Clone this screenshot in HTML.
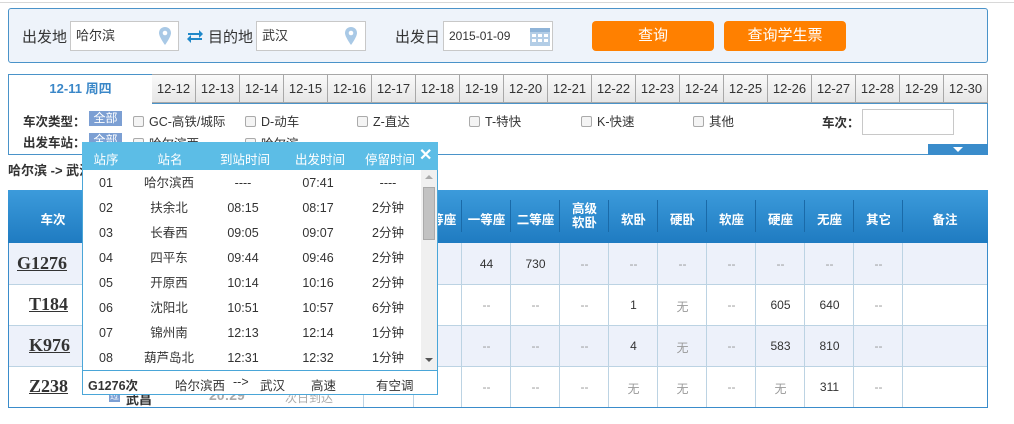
<!DOCTYPE html>
<html><head><meta charset="utf-8"><style>
*{margin:0;padding:0;box-sizing:border-box}
body{width:1014px;height:424px;background:#fff;position:relative;overflow:hidden;font-family:"Liberation Sans","Noto Sans CJK SC",sans-serif;font-size:12px;color:#333}
.a{position:absolute}
.lbl{font-size:15px;color:#333}
.inp{background:#fff;border:1px solid #c8c8c8;height:30px;font-size:13px;line-height:28px;padding-left:5px}
.btn{background:#ff8000;color:#fff;border-radius:4px;font-size:15px;text-align:center;line-height:30px;height:30px}
.tab{top:74px;height:29px;border:1px solid #a8a8a8;border-left:none;background:linear-gradient(#fafafa,#e6e6e6);font-size:13px;text-align:center;line-height:28px;width:44px}
.cb{display:inline-block;width:11px;height:11px;border:1px solid #aaa;border-radius:2px;background:#f4f4f4;vertical-align:-1px;margin-right:5px}
.f{font-size:12.5px}
.th{color:#fff;font-weight:bold;font-size:12.5px;text-align:center}
.hl{top:200px;width:1px;height:32px;background:#1a6aa8}
.vl{width:1px;background:#bcd3e3}
.c{text-align:center;font-size:12px;color:#333}
.d{color:#999}
.tn{font-family:"Liberation Serif",serif;font-weight:bold;font-size:18px;text-decoration:underline;color:#333}
.pr{font-size:12.5px;color:#333}
</style></head><body>
<div class="a" style="left:0;top:2px;width:1014px;height:1px;background:#d8d8d8"></div>
<div class="a" style="left:8px;top:8px;width:980px;height:55px;background:#eef3fa;border:1px solid #4a93c9;border-radius:3px"></div>
<div class="a lbl" style="left:22px;top:26px">出发地</div>
<div class="a inp" style="left:70px;top:21px;width:109px">哈尔滨</div>
<svg class="a" style="left:158px;top:26px" width="14" height="20"><path d="M7 1C3.5 1 1 3.6 1 7c0 4 6 12 6 12s6-8 6-12c0-3.4-2.5-6-6-6z" fill="#a9c9e6"/><circle cx="7" cy="7" r="2.3" fill="#fff"/></svg>
<svg class="a" style="left:186px;top:27px" width="18" height="17"><path d="M2 6h11V3l4 4-4 4V8H2z M16 11H5V8l-4 4 4 4v-3h11z" fill="#1f88c9"/></svg>
<div class="a lbl" style="left:208px;top:26px">目的地</div>
<div class="a inp" style="left:256px;top:21px;width:110px">武汉</div>
<svg class="a" style="left:344px;top:26px" width="14" height="20"><path d="M7 1C3.5 1 1 3.6 1 7c0 4 6 12 6 12s6-8 6-12c0-3.4-2.5-6-6-6z" fill="#a9c9e6"/><circle cx="7" cy="7" r="2.3" fill="#fff"/></svg>
<div class="a lbl" style="left:395px;top:26px">出发日</div>
<div class="a inp" style="left:443px;top:21px;width:110px;font-size:12px">2015-01-09</div>
<svg class="a" style="left:530px;top:26px" width="20" height="20"><rect x="0" y="2" width="20" height="18" fill="#b3cde6"/><rect x="0" y="2" width="20" height="4" fill="#8fb4d8"/><g fill="#fff"><rect x="2" y="8" width="4" height="3"/><rect x="8" y="8" width="4" height="3"/><rect x="14" y="8" width="4" height="3"/><rect x="2" y="13" width="4" height="3"/><rect x="8" y="13" width="4" height="3"/><rect x="14" y="13" width="4" height="3"/></g></svg>
<div class="a btn" style="left:592px;top:21px;width:122px">查询</div>
<div class="a btn" style="left:724px;top:21px;width:122px">查询学生票</div>

<div class="a" style="left:8px;top:103px;width:980px;height:52px;border:1px solid #4a93c9;border-top:none"></div>
<div class="a" style="left:152px;top:103px;width:836px;height:1px;background:#4a93c9"></div>
<div class="a" style="left:8px;top:74px;width:145px;height:30px;border:1px solid #4a93c9;border-bottom:none;background:#fff;color:#3a87c8;font-weight:bold;font-size:13px;text-align:center;line-height:28px">12-11 周四</div>
<div class="a tab" style="left:152px">12-12</div><div class="a tab" style="left:196px">12-13</div><div class="a tab" style="left:240px">12-14</div><div class="a tab" style="left:284px">12-15</div><div class="a tab" style="left:328px">12-16</div><div class="a tab" style="left:372px">12-17</div><div class="a tab" style="left:416px">12-18</div><div class="a tab" style="left:460px">12-19</div><div class="a tab" style="left:504px">12-20</div><div class="a tab" style="left:548px">12-21</div><div class="a tab" style="left:592px">12-22</div><div class="a tab" style="left:636px">12-23</div><div class="a tab" style="left:680px">12-24</div><div class="a tab" style="left:724px">12-25</div><div class="a tab" style="left:768px">12-26</div><div class="a tab" style="left:812px">12-27</div><div class="a tab" style="left:856px">12-28</div><div class="a tab" style="left:900px">12-29</div><div class="a tab" style="left:944px;width:44px">12-30</div>

<div class="a f" style="left:23px;top:111px;font-weight:bold">车次类型：</div>
<div class="a" style="left:89px;top:111px;width:33px;height:15px;background:#7c9fd3;color:#fff;font-size:12px;text-align:center;line-height:15px">全部</div>
<div class="a f" style="left:133px;top:111px"><span class="cb"></span>GC-高铁/城际</div>
<div class="a f" style="left:245px;top:111px"><span class="cb"></span>D-动车</div>
<div class="a f" style="left:357px;top:111px"><span class="cb"></span>Z-直达</div>
<div class="a f" style="left:469px;top:111px"><span class="cb"></span>T-特快</div>
<div class="a f" style="left:581px;top:111px"><span class="cb"></span>K-快速</div>
<div class="a f" style="left:693px;top:111px"><span class="cb"></span>其他</div>
<div class="a f" style="left:822px;top:112px;font-weight:bold">车次：</div>
<div class="a" style="left:862px;top:109px;width:92px;height:26px;border:1px solid #c8c8c8;background:#fff"></div>
<div class="a f" style="left:23px;top:132px;font-weight:bold">出发车站：</div>
<div class="a" style="left:89px;top:133px;width:33px;height:15px;background:#7c9fd3;color:#fff;font-size:12px;text-align:center;line-height:15px">全部</div>
<div class="a f" style="left:133px;top:133px"><span class="cb"></span>哈尔滨西</div>
<div class="a f" style="left:245px;top:133px"><span class="cb"></span>哈尔滨</div>
<div class="a" style="left:928px;top:144px;width:60px;height:11px;background:#3a8ccb"></div>
<div class="a" style="left:953px;top:147px;width:0;height:0;border-left:5px solid transparent;border-right:5px solid transparent;border-top:5px solid #fff"></div>

<div class="a" style="left:8px;top:160px;font-weight:bold;font-size:13px">哈尔滨 -&gt; 武汉</div>

<!-- table -->
<div class="a" style="left:8px;top:190px;width:980px;height:218px;border:1px solid #3a8ccb"></div>
<div class="a" style="left:8px;top:190px;width:980px;height:53px;background:linear-gradient(#3c9bdb,#1f7bc1)"></div>
<div class="a" style="left:9px;top:243px;width:978px;height:41px;background:#edf1fa"></div>
<div class="a" style="left:9px;top:325px;width:978px;height:41px;background:#edf1fa"></div>
<div class="a" style="left:9px;top:284px;width:978px;height:1px;background:#bcd3e3"></div>
<div class="a" style="left:9px;top:325px;width:978px;height:1px;background:#bcd3e3"></div>
<div class="a" style="left:9px;top:366px;width:978px;height:1px;background:#bcd3e3"></div>
<div class="a th" style="left:8px;top:209px;width:90px">车次</div>
<div class="a th" style="left:413px;top:209px;width:49px">特等座</div>
<div class="a th" style="left:462px;top:209px;width:49px">一等座</div>
<div class="a th" style="left:511px;top:209px;width:49px">二等座</div>
<div class="a th" style="left:560px;top:202px;width:49px;line-height:14px">高级<br>软卧</div>
<div class="a th" style="left:609px;top:209px;width:49px">软卧</div>
<div class="a th" style="left:658px;top:209px;width:49px">硬卧</div>
<div class="a th" style="left:707px;top:209px;width:49px">软座</div>
<div class="a th" style="left:756px;top:209px;width:49px">硬座</div>
<div class="a th" style="left:805px;top:209px;width:49px">无座</div>
<div class="a th" style="left:854px;top:209px;width:49px">其它</div>
<div class="a th" style="left:903px;top:209px;width:84px">备注</div>
<div class="a hl" style="left:461px"></div><div class="a hl" style="left:510px"></div><div class="a hl" style="left:559px"></div><div class="a hl" style="left:608px"></div><div class="a hl" style="left:657px"></div><div class="a hl" style="left:706px"></div><div class="a hl" style="left:755px"></div><div class="a hl" style="left:804px"></div><div class="a hl" style="left:853px"></div><div class="a hl" style="left:902px"></div>
<div class="a vl" style="left:363px;top:243px;height:164px"></div>
<div class="a vl" style="left:413px;top:243px;height:164px"></div>
<div class="a vl" style="left:461px;top:243px;height:164px"></div><div class="a vl" style="left:510px;top:243px;height:164px"></div><div class="a vl" style="left:559px;top:243px;height:164px"></div><div class="a vl" style="left:608px;top:243px;height:164px"></div><div class="a vl" style="left:657px;top:243px;height:164px"></div><div class="a vl" style="left:706px;top:243px;height:164px"></div><div class="a vl" style="left:755px;top:243px;height:164px"></div><div class="a vl" style="left:804px;top:243px;height:164px"></div><div class="a vl" style="left:853px;top:243px;height:164px"></div><div class="a vl" style="left:902px;top:243px;height:164px"></div>

<div class="a tn" style="left:17px;top:253px">G1276</div>
<div class="a tn" style="left:29px;top:294px">T184</div>
<div class="a tn" style="left:29px;top:335px">K976</div>
<div class="a tn" style="left:29px;top:376px">Z238</div>

<div class="a c" style="left:462px;top:257px;width:49px">44</div><div class="a c" style="left:511px;top:257px;width:49px">730</div>
<div class="a c d" style="left:560px;top:257px;width:49px">--</div><div class="a c d" style="left:609px;top:257px;width:49px">--</div><div class="a c d" style="left:658px;top:257px;width:49px">--</div><div class="a c d" style="left:707px;top:257px;width:49px">--</div><div class="a c d" style="left:756px;top:257px;width:49px">--</div><div class="a c d" style="left:805px;top:257px;width:49px">--</div><div class="a c d" style="left:854px;top:257px;width:49px">--</div>

<div class="a c d" style="left:462px;top:298px;width:49px">--</div><div class="a c d" style="left:511px;top:298px;width:49px">--</div><div class="a c d" style="left:560px;top:298px;width:49px">--</div><div class="a c" style="left:609px;top:298px;width:49px">1</div><div class="a c d" style="left:658px;top:298px;width:49px">无</div><div class="a c d" style="left:707px;top:298px;width:49px">--</div><div class="a c" style="left:756px;top:298px;width:49px">605</div><div class="a c" style="left:805px;top:298px;width:49px">640</div><div class="a c d" style="left:854px;top:298px;width:49px">--</div>

<div class="a c d" style="left:462px;top:339px;width:49px">--</div><div class="a c d" style="left:511px;top:339px;width:49px">--</div><div class="a c d" style="left:560px;top:339px;width:49px">--</div><div class="a c" style="left:609px;top:339px;width:49px">4</div><div class="a c d" style="left:658px;top:339px;width:49px">无</div><div class="a c d" style="left:707px;top:339px;width:49px">--</div><div class="a c" style="left:756px;top:339px;width:49px">583</div><div class="a c" style="left:805px;top:339px;width:49px">810</div><div class="a c d" style="left:854px;top:339px;width:49px">--</div>

<div class="a c d" style="left:462px;top:380px;width:49px">--</div><div class="a c d" style="left:511px;top:380px;width:49px">--</div><div class="a c d" style="left:560px;top:380px;width:49px">--</div><div class="a c d" style="left:609px;top:380px;width:49px">无</div><div class="a c d" style="left:658px;top:380px;width:49px">无</div><div class="a c d" style="left:707px;top:380px;width:49px">--</div><div class="a c d" style="left:756px;top:380px;width:49px">无</div><div class="a c" style="left:805px;top:380px;width:49px">311</div><div class="a c d" style="left:854px;top:380px;width:49px">--</div>

<div class="a" style="left:109px;top:391px;width:11px;height:11px;background:#7c9fd3;color:#fff;font-size:9px;line-height:11px;text-align:center">过</div>
<div class="a" style="left:126px;top:389px;font-weight:bold;font-size:13px">武昌</div>
<div class="a" style="left:209px;top:387px;font-weight:bold;font-size:14px;color:#aaa">20:29</div>
<div class="a" style="left:285px;top:389px;font-size:12px;color:#aaa">次日到达</div>

<!-- popup -->
<div class="a" style="left:82px;top:142px;width:356px;height:253px;background:#fff;border:1px solid #4aa6d8"></div>
<div class="a" style="left:82px;top:142px;width:356px;height:28px;background:#5cbde6"></div>
<div class="a pr" style="left:82px;top:149px;width:48px;text-align:center;color:#fff">站序</div>
<div class="a pr" style="left:138px;top:149px;width:64px;text-align:center;color:#fff">站名</div>
<div class="a pr" style="left:210px;top:149px;width:70px;text-align:center;color:#fff">到站时间</div>
<div class="a pr" style="left:285px;top:149px;width:70px;text-align:center;color:#fff">出发时间</div>
<div class="a pr" style="left:362px;top:149px;width:56px;text-align:center;color:#fff">停留时间</div>
<div class="a" style="left:419px;top:145px;color:#fff;font-weight:bold;font-size:16px">✕</div>
<div class="a" style="left:421px;top:170px;width:16px;height:200px;background:#f0f0f0"></div>
<div class="a" style="left:423px;top:187px;width:12px;height:53px;background:#c2c2c2;border:1px solid #aaa"></div>
<div class="a" style="left:425px;top:175px;border-left:4px solid transparent;border-right:4px solid transparent;border-bottom:4px solid #aaa"></div>
<div class="a" style="left:425px;top:358px;border-left:4px solid transparent;border-right:4px solid transparent;border-top:4px solid #555"></div>
<div class="a" style="left:82px;top:370px;width:356px;height:1px;background:#4aa6d8"></div>
<div class="a" style="left:82px;top:171px;width:336px;line-height:25px;font-size:12.5px">
<table style="border-collapse:collapse;width:336px;font-size:12.5px">
<tr><td style="width:48px;text-align:center">01</td><td style="width:78px;text-align:center">哈尔滨西</td><td style="width:70px;text-align:center">----</td><td style="width:80px;text-align:center">07:41</td><td style="text-align:center">----</td></tr>
<tr><td align=center>02</td><td align=center>扶余北</td><td align=center>08:15</td><td align=center>08:17</td><td align=center>2分钟</td></tr>
<tr><td align=center>03</td><td align=center>长春西</td><td align=center>09:05</td><td align=center>09:07</td><td align=center>2分钟</td></tr>
<tr><td align=center>04</td><td align=center>四平东</td><td align=center>09:44</td><td align=center>09:46</td><td align=center>2分钟</td></tr>
<tr><td align=center>05</td><td align=center>开原西</td><td align=center>10:14</td><td align=center>10:16</td><td align=center>2分钟</td></tr>
<tr><td align=center>06</td><td align=center>沈阳北</td><td align=center>10:51</td><td align=center>10:57</td><td align=center>6分钟</td></tr>
<tr><td align=center>07</td><td align=center>锦州南</td><td align=center>12:13</td><td align=center>12:14</td><td align=center>1分钟</td></tr>
<tr><td align=center>08</td><td align=center>葫芦岛北</td><td align=center>12:31</td><td align=center>12:32</td><td align=center>1分钟</td></tr>
</table></div>
<div class="a pr" style="left:88px;top:375px;font-weight:bold">G1276次</div>
<div class="a pr" style="left:175px;top:375px">哈尔滨西</div>
<div class="a pr" style="left:233px;top:375px">--&gt;</div>
<div class="a pr" style="left:260px;top:375px">武汉</div>
<div class="a pr" style="left:311px;top:375px">高速</div>
<div class="a pr" style="left:376px;top:375px">有空调</div>
</body></html>
